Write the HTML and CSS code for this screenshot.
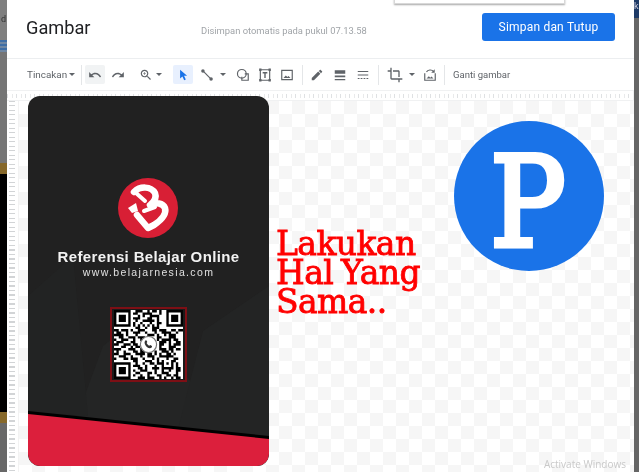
FILE: index.html
```html
<!DOCTYPE html>
<html lang="id">
<head>
<meta charset="utf-8">
<title>Gambar</title>
<link rel="stylesheet" href="styles.css">
</head>
<body>
<div class="page">
  <aside class="back-left">
    <div class="bl-a"><span class="bl-char">d</span></div>
    <div class="bl-lines"></div>
    <div class="bl-b"></div>
    <div class="bl-band"></div>
    <div class="bl-black"></div>
    <div class="bl-band"></div>
    <div class="bl-c"></div>
  </aside>
  <main class="dialog">
    <header class="head">
      <h1 class="title">Gambar</h1>
      <p class="saved">Disimpan otomatis pada pukul 07.13.58</p>
      <button class="save">Simpan dan Tutup</button>
    </header>
    <nav class="toolbar">
      <span class="menu">Tincakan<i class="caret c-small"></i></span>
      <span class="sep m7"></span>
      <span class="tb active m3"><svg viewBox="0 0 24 24"><path d="M12.5 8c-2.65 0-5.05.99-6.9 2.6L2 7v9h9l-3.62-3.62c1.39-1.16 3.16-1.88 5.12-1.88 3.54 0 6.55 2.31 7.6 5.5l2.37-.78C21.08 11.03 17.15 8 12.5 8z"/></svg></span>
      <span class="tb m3"><svg viewBox="0 0 24 24"><path d="M18.4 10.6C16.55 8.99 14.15 8 11.5 8c-4.65 0-8.58 3.03-9.96 7.22L3.9 16c1.05-3.19 4.05-5.5 7.6-5.5 1.95 0 3.73.72 5.12 1.88L13 16h9V7l-3.6 3.6z"/></svg></span>
      <span class="tb narrow m11"><svg viewBox="0 0 24 24"><path d="M15.5 14h-.79l-.28-.27C15.41 12.59 16 11.11 16 9.5 16 5.91 13.09 3 9.5 3S3 5.91 3 9.5 5.91 16 9.5 16c1.61 0 3.09-.59 4.23-1.57l.27.28v.79l5 4.99L20.49 19l-4.99-5zm-6 0C7.01 14 5 11.99 5 9.5S7.01 5 9.5 5 14 7.01 14 9.5 11.99 14 9.5 14z"/><path d="M12 10h-2v2H9v-2H7V9h2V7h1v2h2v1z"/></svg></span>
      <i class="caret m2"></i>
      <span class="tb selected m10"><svg viewBox="0 0 24 24"><path class="blue" d="M7 3v15l4-3.6L14 21l2.8-1.2-3-6.4H19z"/></svg></span>
      <span class="tb narrow m7"><svg viewBox="0 0 24 24"><path class="line" d="M5 5l14 14"/><circle cx="5" cy="5" r="3"/><circle cx="19" cy="19" r="3"/></svg></span>
      <i class="caret m5"></i>
      <span class="tb m6"><svg viewBox="0 0 24 24"><circle class="line" cx="10" cy="10" r="7.5"/><path class="line" d="M15 10h6v11H10v-6"/></svg></span>
      <span class="tb m2"><svg viewBox="0 0 24 24"><path class="line" d="M4 3h16v18H4z"/><path d="M8 7h8v2.4h-2.8V17h-2.4V9.4H8z"/><path d="M2 1h4v4H2zM18 1h4v4h-4zM2 19h4v4H2zM18 19h4v4h-4z"/></svg></span>
      <span class="tb m2"><svg viewBox="0 0 24 24"><path class="line" d="M3 4h18v16H3z"/><path d="M6 17l4-4 2.5 2.5 2-2L18 17z"/></svg></span>
      <span class="sep m5"></span>
      <span class="tb m4"><svg viewBox="0 0 24 24"><path d="M3 17.25V21h3.75L17.81 9.94l-3.75-3.75L3 17.25zM20.71 7.04c.39-.39.39-1.02 0-1.41l-2.34-2.34c-.39-.39-1.02-.39-1.41 0l-1.83 1.83 3.75 3.75 1.83-1.83z"/></svg></span>
      <span class="tb m3"><svg viewBox="0 0 24 24"><path d="M3 4h18v6H3zM3 13h18v3H3zM3 19h18v2H3z"/></svg></span>
      <span class="tb m3"><svg viewBox="0 0 24 24"><path d="M3 5h18v2H3zM3 11h18v2H3zM3 17h3v2H3zM8 17h3v2H8zM13 17h3v2h-3zM18 17h3v2h-3z"/></svg></span>
      <span class="sep m5"></span>
      <span class="tb m6"><svg class="big" viewBox="0 0 24 24"><path d="M17 15h2V7c0-1.1-.9-2-2-2H9v2h8v8zM7 17V1H5v4H1v2h4v10c0 1.1.9 2 2 2h10v4h2v-4h4v-2H7z"/></svg></span>
      <i class="caret m3"></i>
      <span class="tb m4"><svg viewBox="0 0 24 24"><path class="line" d="M3 9v12h18V9"/><path class="line" d="M6 7c2-4 9-5 12-1"/><path d="M20 2v6h-6z"/><path d="M6 18l4-4 2.5 2.5 2-2L18 18z"/></svg></span>
      <span class="sep m4"></span>
      <span class="menu replace">Ganti gambar</span>
    </nav>
    <section class="workspace">
      <div class="ruler-top"></div>
      <div class="work-row">
        <div class="ruler-left"></div>
        <div class="canvas"></div>
      </div>

      <article class="card">
        <svg class="card-bg" viewBox="0 0 241 370">
          <rect class="bg" width="241" height="370"/>
          <path class="bg-a" d="M40 345 75 250 120 215 165 290 180 335z"/>
          <path class="bg-b" d="M150 333 175 235 241 190V345z"/>
          <path class="bg-c" d="M0 200 45 160 60 320 0 316z"/>
          <path class="black" d="M0 315 241 340V344L0 319z"/>
          <path class="red" d="M0 318 241 343V358a12 12 0 0 1-12 12H12a12 12 0 0 1-12-12z"/>
        </svg>
        <svg class="logo" viewBox="0 0 60 60">
          <circle class="logo-disc" cx="30" cy="30" r="30"/>
          <path class="logo-b" d="M16 14C22 8 33 8 37 15 39 20 36 24 32 27 38 24 45 25 47 30 49 37 42 43 36 47L30 50 19 37"/>
          <path class="logo-b thin" d="M18 15 27 23M26 33 37 29"/>
          <path class="logo-wifi" d="M10 30 18 25 20 33 14 35z"/>
        </svg>
        <h2 class="card-title">Referensi Belajar Online</h2>
        <p class="card-url">www.belajarnesia.com</p>
        <div class="qr">
          <svg viewBox="0 0 29 29">
            <rect class="qr-white" width="29" height="29"/>
            <path class="qr-box" d="M.5.5h6v6h-6zM22.5.5h6v6h-6zM.5 22.5h6v6h-6z"/>
            <path class="qr-fill" d="M2 2h3v3H2zM24 2h3v3h-3zM2 24h3v3H2z"/>
            <path class="qr-mods" d="M9 .5h3m2 0h1m1 0h2m1 0h1M8 1.5h2m2 0h4m3 0h1M10 2.5h1m1 0h1m2 0h4M8 3.5h3m3 0h2m2 0h1M9 4.5h1m2 0h5m1 0h1M8 5.5h1m2 0h1m3 0h1m2 0h2M8 6.5h1m1 0h1m1 0h1m1 0h1m1 0h1m1 0h1M9 7.5h2m2 0h1m2 0h3M0 8.5h2m1 0h3m1 0h1m2 0h3m3 0h2m1 0h3m2 0h2m1 0h2M1 9.5h2m2 0h1m2 0h3m2 0h1m3 0h1m2 0h4m2 0h1M0 10.5h4m1 0h1m3 0h1m4 0h3m1 0h1m2 0h1m1 0h3M2 11.5h2m2 0h3m1 0h3m5 0h2m3 0h3M0 12.5h1m2 0h3m2 0h1m2 0h1m6 0h1m1 0h4m1 0h2M1 13.5h3m3 0h2m10 0h3m1 0h1m2 0h2M0 14.5h2m2 0h3m1 0h2m9 0h2m2 0h1m1 0h3M3 15.5h2m2 0h1m1 0h2m8 0h1m3 0h3M0 16.5h3m3 0h3m2 0h1m7 0h3m1 0h2m1 0h2M1 17.5h1m2 0h1m3 0h2m1 0h2m4 0h1m2 0h3m1 0h1M0 18.5h2m2 0h3m2 0h4m1 0h2m1 0h1m1 0h1m2 0h2m1 0h1M2 19.5h3m2 0h1m3 0h1m2 0h3m2 0h6M0 20.5h1m3 0h2m1 0h3m2 0h1m3 0h1m1 0h1m3 0h1m2 0h2M8 21.5h2m3 0h3m2 0h1m1 0h1m3 0h2M9 22.5h1m2 0h1m2 0h2m1 0h3m1 0h1m1 0h1m1 0h1M8 23.5h3m2 0h1m3 0h1m2 0h1m3 0h1m1 0h1M10 24.5h2m1 0h1m2 0h3m1 0h5m1 0h2M8 25.5h1m2 0h3m3 0h1m2 0h1m2 0h1m2 0h2M9 26.5h2m3 0h2m1 0h1m2 0h3m3 0h1M8 27.5h1m2 0h1m2 0h1m3 0h2m2 0h2m1 0h2M10 28.5h3m1 0h3m2 0h1m1 0h1m2 0h1m1 0h2"/>
            <circle class="qr-ring" cx="14.5" cy="14.5" r="3.4"/>
            <path class="qr-phone" d="M13 13c.2-.4.7-.4.8 0l.2.5-.3.4c.2.5.6.9 1.1 1.1l.4-.3.6.3c.3.2.2.6 0 .8-.5.5-1.3.3-2-.3-.8-.7-1.2-1.7-.8-2.500z"/>
          </svg>
        </div>
      </article>

      <p class="slogan">Lakukan<br>Hal Yang<br>Sama..</p>

      <svg class="p-logo" viewBox="0 0 150 150">
        <circle class="p-disc" cx="75" cy="75" r="75"/>
        <text class="p-letter" x="36" y="125" textLength="76" lengthAdjust="spacingAndGlyphs">P</text>
      </svg>

      <span class="activate">Activate Windows</span>
    </section>
  </main>
  <aside class="back-right">
    <div class="br-top"><span class="br-char">k</span></div>
  </aside>
  <div class="dropdown"></div>
</div>
</body>
</html>
```
FILE: styles.css
```css
* { box-sizing: border-box; }
html, body { margin: 0; padding: 0; height: 100%; }
body { overflow: hidden; background: #666; font-family: Roboto, "Liberation Sans", sans-serif; }
.page { position: relative; display: flex; width: 639px; height: 472px; overflow: hidden; filter: blur(.35px); }

.back-left { width: 7px; flex: none; display: flex; flex-direction: column; }
.bl-a { height: 40px; background: #7f7f7f; overflow: hidden; }
.bl-char { display: block; margin: 14px 0 0 1px; font-size: 9px; line-height: 10px; color: #333; }
.bl-lines { height: 12px; background: repeating-linear-gradient(#3f6ea6 0 2px, #6f87a3 2px 4px); }
.bl-b { height: 111px; background: #757575; }
.bl-band { height: 11px; background: #86682a; }
.bl-black { height: 238px; background: #000; }
.bl-c { flex: 1; background: #686868; }

.back-right { width: 5px; flex: none; background: #666; }
.br-top { height: 18px; background: #1d3a66; overflow: hidden; }
.br-char { display: block; font-size: 9px; line-height: 12px; color: #ccd; }

.dialog { width: 627px; flex: none; display: flex; flex-direction: column; background: #fff; }

.head { height: 59px; flex: none; display: flex; align-items: flex-start; padding: 0 19px 0 19px; border-bottom: 1px solid #eceef0; }
.title { margin: 17px 0 0; font-size: 18.2px; line-height: 22px; font-weight: 400; color: #202124; width: 175px; }
.saved { margin: 25px 0 0; font-size: 9.4px; line-height: 12px; color: #a0a4a8; width: 281px; white-space: nowrap; }
.save { margin: 13px 0 0; width: 133px; height: 28px; border: 0; border-radius: 3px; background: #1a73e8; color: #fff; font: 400 12px/27px Roboto, sans-serif; letter-spacing: .2px; padding: 0; }

.toolbar { height: 31px; flex: none; display: flex; align-items: center; padding-left: 20px; }
.menu { display: flex; align-items: center; width: 47px; font-size: 9.9px; color: #5f6368; white-space: nowrap; }
.replace { width: auto; margin-left: 8px; font-size: 9.5px; }
.caret { flex: none; display: block; width: 8px; height: 3px; }
.caret::before { content: ""; display: block; margin: 0 auto; width: 0; height: 0; border: 3px solid transparent; border-top: 3px solid #5f6368; border-bottom: 0; }
.c-small { margin-left: 1px; }
.sep { flex: none; width: 1px; height: 20px; background: #e4e6e8; }
.tb { flex: none; width: 20px; height: 19px; display: flex; align-items: center; justify-content: center; border-radius: 2px; }
.tb svg { width: 14px; height: 14px; fill: #5f6368; }
.tb svg.big { width: 16px; height: 16px; }
.tb .line { fill: none; stroke: #5f6368; stroke-width: 2; }
.tb .blue { fill: #1a73e8; }
.narrow { width: 14px; }
.active { background: #f1f3f4; }
.selected { background: #e8f0fe; }
.m2 { margin-left: 2px; }
.m3 { margin-left: 3px; }
.m4 { margin-left: 4px; }
.m5 { margin-left: 5px; }
.m6 { margin-left: 6px; }
.m7 { margin-left: 7px; }
.m10 { margin-left: 10px; }
.m11 { margin-left: 11px; }

.workspace { position: relative; flex: 1; display: flex; flex-direction: column; min-height: 0; }
.ruler-top { height: 11px; flex: none; border: 1px solid #f0f1f2; border-left: 0; background:
  repeating-linear-gradient(90deg, #dfe1e3 0 1px, transparent 1px 5px, #e9eaeb 5px 6px, transparent 6px 9px) 0 3px / 100% 4px no-repeat #fff; }
.work-row { flex: 1; display: flex; min-height: 0; }
.ruler-left { width: 12px; flex: none; background:
  repeating-linear-gradient(#d2d4d6 0 1px, transparent 1px 4.5px) 2px 0 / 6px 100% no-repeat #fff; border-right: 1px solid #f2f2f2; }
.canvas { flex: 1; background: conic-gradient(#f6f6f6 25%, #fff 0 50%, #f6f6f6 0 75%, #fff 0) 0 0 / 26px 26px; }

.card { position: absolute; left: 21px; top: 6px; width: 241px; height: 370px; border-radius: 12px; overflow: hidden; }
.card-bg { position: absolute; left: 0; top: 0; width: 241px; height: 370px; }
.bg { fill: #212121; }
.bg-a { fill: #242525; }
.bg-b { fill: #232424; }
.bg-c { fill: #222323; }
.black { fill: #000; }
.red { fill: #dc1f3c; }

.logo { position: absolute; left: 90px; top: 82px; width: 60px; height: 60px; }
.logo-disc { fill: #d81f35; }
.logo-b { fill: none; stroke: #fff; stroke-width: 6.5; stroke-linecap: round; stroke-linejoin: round; }
.logo-b.thin { stroke-width: 4; }
.logo-wifi { fill: #fff; }

.card-title { position: absolute; left: 0; right: 0; top: 152px; margin: 0; text-align: center; font: 700 15px/18px "Liberation Sans", sans-serif; letter-spacing: .35px; color: #f2f2f2; white-space: nowrap; }
.card-url { position: absolute; left: 0; right: 0; top: 170px; margin: 0; text-align: center; font: 400 10.5px/13px "Liberation Sans", sans-serif; letter-spacing: 1.35px; color: #e0e0e0; white-space: nowrap; }

.qr { position: absolute; left: 82px; top: 211px; width: 77px; height: 75px; padding: 1px; border: 2px solid #7d0f15; background: #1a1a1a; }
.qr svg { display: block; width: 100%; height: 100%; }
.qr-white { fill: #fff; }
.qr-box { fill: none; stroke: #000; stroke-width: 1; }
.qr-fill { fill: #000; }
.qr-mods { fill: none; stroke: #000; stroke-width: 1; }
.qr-ring { fill: #fff; stroke: #777; stroke-width: .5; }
.qr-phone { fill: #333; }

.slogan { position: absolute; left: 269px; top: 139px; margin: 0; font: 400 33px/29px "DejaVu Serif", serif; letter-spacing: -.6px; word-spacing: -2px; color: #f00; -webkit-text-stroke: .8px #f00; white-space: nowrap; }

.p-logo { position: absolute; left: 447px; top: 31px; width: 150px; height: 150px; overflow: visible; }
.p-disc { fill: #1a73e8; }
.p-letter { font: 400 125px "DejaVu Serif", serif; fill: #fff; stroke: #fff; stroke-width: 5; }

.activate { position: absolute; right: 8px; bottom: 2px; font: 400 10px/12px "Open Sans", sans-serif; color: #c9c9c9; white-space: nowrap; }

.dropdown { position: absolute; left: 394px; top: -2px; width: 171px; height: 6px; background: #fff; border: 1px solid #d8d8d8; box-shadow: 0 1px 2px rgba(0,0,0,.35); }
```
